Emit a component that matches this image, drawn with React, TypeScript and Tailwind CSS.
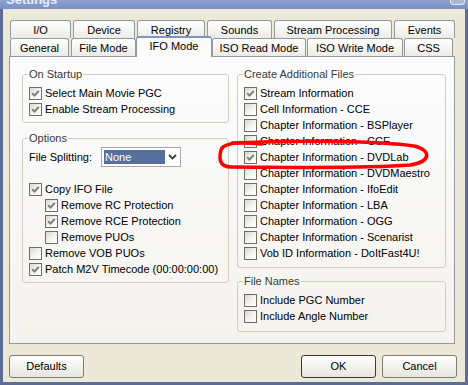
import React from 'react';

const row1: [string, number][] = [
  ['I/O', 61],
  ['Device', 62],
  ['Registry', 68],
  ['Sounds', 65],
  ['Stream Processing', 118],
  ['Events', 61],
];

const createFiles: [string, boolean][] = [
  ['Stream Information', true],
  ['Cell Information - CCE', false],
  ['Chapter Information - BSPlayer', false],
  ['Chapter Information - CCE', false],
  ['Chapter Information - DVDLab', true],
  ['Chapter Information - DVDMaestro', false],
  ['Chapter Information - IfoEdit', false],
  ['Chapter Information - LBA', false],
  ['Chapter Information - OGG', false],
  ['Chapter Information - Scenarist', false],
  ['Vob ID Information - DoItFast4U!', false],
];

function Check({ checked }: { checked?: boolean }) {
  return (
    <span className="flex h-[13px] w-[13px] shrink-0 items-center justify-center border border-[#6f6e69] bg-linear-to-br from-[#d8d7d0] via-[#f3f3ef] to-white">
      {checked && (
        <svg width="9" height="9" viewBox="0 0 9 9">
          <path d="M1.2 4.2 L3.4 6.6 L7.8 1.8" stroke="#7a7975" strokeWidth="1.9" fill="none" />
        </svg>
      )}
    </span>
  );
}

function CheckRow({ label, checked, indent }: { label: string; checked?: boolean; indent?: boolean }) {
  return (
    <div className={`flex h-4 items-center gap-[3px] ${indent ? 'pl-[16px]' : ''}`}>
      <Check checked={checked} />
      <span className="whitespace-nowrap leading-[13px]">{label}</span>
    </div>
  );
}

function Group({ title, className, children }: { title: string; className?: string; children: React.ReactNode }) {
  return (
    <fieldset className={`rounded-[3px] border border-[#d0d0bf] px-[6px] ${className ?? ''}`}>
      <legend className="ml-[-1px] px-[1px] leading-[13px] text-[#3a3a3a]">{title}</legend>
      {children}
    </fieldset>
  );
}

function Tab({ label, width, selected }: { label: string; width: number; selected?: boolean }) {
  if (selected) {
    return (
      <div
        className="relative z-10 -mt-[2px] h-[21px] shrink-0 rounded-t-[3px] border border-b-0 border-[#919b9c] border-t-2 border-t-[#8195c3] bg-[#fbfbf9] text-center leading-[16px]"
        style={{ width }}
      >
        {label}
      </div>
    );
  }
  return (
    <div
      className="h-[18px] shrink-0 rounded-t-[3px] border border-b-0 border-[#919b9c] bg-linear-to-b from-white to-[#ecebe6] text-center leading-[18px]"
      style={{ width }}
    >
      {label}
    </div>
  );
}

function Button({ label, primary }: { label: string; primary?: boolean }) {
  return (
    <div
      className={`flex h-[23px] w-[75px] items-center justify-center rounded-[3px] border bg-linear-to-b from-white to-[#e6e5de] ${
        primary ? 'border-[#3a3a3a]' : 'border-[#7b7b78]'
      }`}
    >
      {label}
    </div>
  );
}

export default function App() {
  return (
    <div className="relative flex h-[385px] w-[468px] flex-col overflow-hidden bg-[#5b6c9a] font-['Tahoma','Liberation_Sans',Arial,sans-serif] text-[11px] text-black">
      {/* title bar, mostly cut off */}
      <div className="flex h-[9px] shrink-0 items-start justify-between overflow-hidden bg-linear-to-b from-[#8ea2cf] to-[#7a90c2] pl-[6px] pr-[3px]">
        <span className="-mt-[7px] text-[13px] font-bold leading-[14px] text-[#e8ecf6]">Settings</span>
        <span className="-mt-[9px] h-[14px] w-[15px] rounded-[3px] border border-[#e4e8f2] bg-[#a9b8d9]" />
      </div>

      <div className="mx-[3px] mb-[3px] flex flex-1 flex-col bg-[#ece9d8] pt-[11px]">
        {/* tabs */}
        <div className="ml-[7px] flex gap-[2px]">
          {row1.map(([l, w]) => (
            <Tab key={l} label={l} width={w} />
          ))}
        </div>
        <div className="ml-[7px] flex h-[18px] items-start">
          <Tab label="General" width={59} />
          <div className="w-[2px]" />
          <Tab label="File Mode" width={65} />
          <Tab label="IFO Mode" width={76} selected />
          <Tab label="ISO Read Mode" width={94} />
          <div className="w-[1px]" />
          <Tab label="ISO Write Mode" width={96} />
          <div className="w-[1px]" />
          <Tab label="CSS" width={49} />
        </div>

        {/* panel */}
        <div className="ml-[6px] flex h-[288px] w-[446px] gap-[8px] border border-[#919b9c] bg-linear-to-b from-[#fcfcfe] to-[#f4f3ee] pl-[12px] pr-[8px] pt-[11px]">
          <div className="flex w-[208px] flex-col">
            <Group title="On Startup" className="pb-[5px]">
              <div className="pt-[4px]">
                <CheckRow label="Select Main Movie PGC" checked />
                <CheckRow label="Enable Stream Processing" checked />
              </div>
            </Group>
            <Group title="Options" className="mt-[9px] pb-[5px]">
              <div className="mt-[2px] flex h-[20px] items-center">
                <span className="w-[72px]">File Splitting:</span>
                <div className="flex h-[20px] w-[80px] items-center border border-[#a7a6aa] bg-white pl-[2px]">
                  <span className="h-[14px] w-[61px] bg-[#56709d] pl-[1px] leading-[14px] text-white">None</span>
                  <span className="flex flex-1 items-center justify-center">
                    <svg width="9" height="6" viewBox="0 0 9 6">
                      <path d="M1 1 L4.5 4.5 L8 1" stroke="#3c3c3c" strokeWidth="1.8" fill="none" />
                    </svg>
                  </span>
                </div>
              </div>
              <div className="mt-[14px]">
                <CheckRow label="Copy IFO File" checked />
                <CheckRow label="Remove RC Protection" checked indent />
                <CheckRow label="Remove RCE Protection" checked indent />
                <CheckRow label="Remove PUOs" indent />
                <CheckRow label="Remove VOB PUOs" />
                <CheckRow label="Patch M2V Timecode (00:00:00:00)" checked />
              </div>
            </Group>
          </div>

          <div className="flex w-[210px] flex-col">
            <Group title="Create Additional Files" className="pb-[6px]">
              <div className="pt-[4px]">
                {createFiles.map(([l, c]) => (
                  <CheckRow key={l} label={l} checked={c} />
                ))}
              </div>
            </Group>
            <Group title="File Names" className="mt-[7px] pb-[7px]">
              <div className="pt-[4px]">
                <CheckRow label="Include PGC Number" />
                <CheckRow label="Include Angle Number" />
              </div>
            </Group>
          </div>
        </div>

        {/* buttons */}
        <div className="mt-[11px] flex pl-[6px] pr-[8px]">
          <Button label="Defaults" />
          <div className="flex-1" />
          <div className="flex gap-[6px]">
            <Button label="OK" primary />
            <Button label="Cancel" />
          </div>
        </div>
      </div>

      {/* red hand-drawn ellipse */}
      <svg className="pointer-events-none absolute inset-0" width="468" height="385" viewBox="0 0 468 385">
        <path
          d="M232 143 C300 140 380 141 414 146 C432 150 431 162 410 165 C360 169 280 167 231 167 C219 167 219 158 221 150 C223 143 240 142 262 144"
          stroke="#ff0000"
          strokeWidth="3.5"
          fill="none"
          strokeLinecap="round"
        />
      </svg>
    </div>
  );
}
